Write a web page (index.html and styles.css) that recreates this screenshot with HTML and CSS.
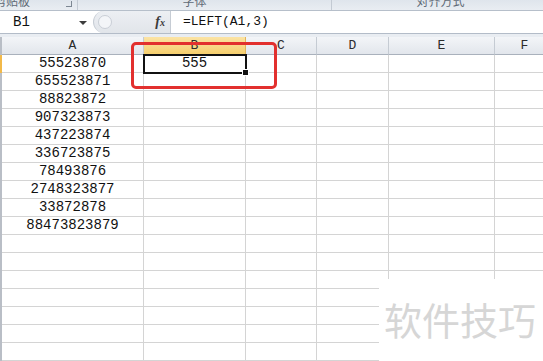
FILE: index.html
```html
<!DOCTYPE html>
<html lang="zh-CN">
<head>
    <meta charset="UTF-8">
    <title>LEFT 函数</title>
    <link rel="stylesheet" href="styles.css">
</head>
<body>
    <div class="ribbon">
        <div class="group group-clip"><span class="group-label">剪贴板</span><span class="launcher"></span></div>
        <div class="group group-font"><span class="group-label">字体</span></div>
        <div class="group group-align"><span class="group-label">对齐方式</span></div>
    </div>
    <div class="formula-bar">
        <div class="name-box">B1<span class="drop-arrow"></span></div>
        <div class="fx-area">
            <span class="expand-btn"></span>
            <span class="fx">f<small>x</small></span>
        </div>
        <div class="formula-input">=LEFT(A1,3)</div>
    </div>
    <div class="sheet-wrap">
        <div class="sheet">
            <div class="col-head">A</div>
            <div class="col-head active">B</div>
            <div class="col-head">C</div>
            <div class="col-head">D</div>
            <div class="col-head">E</div>
            <div class="col-head">F</div>

            <div class="cell row-active">55523870</div><div class="cell selected">555</div><div class="cell"></div><div class="cell"></div><div class="cell"></div><div class="cell"></div>
            <div class="cell">655523871</div><div class="cell"></div><div class="cell"></div><div class="cell"></div><div class="cell"></div><div class="cell"></div>
            <div class="cell">88823872</div><div class="cell"></div><div class="cell"></div><div class="cell"></div><div class="cell"></div><div class="cell"></div>
            <div class="cell">907323873</div><div class="cell"></div><div class="cell"></div><div class="cell"></div><div class="cell"></div><div class="cell"></div>
            <div class="cell">437223874</div><div class="cell"></div><div class="cell"></div><div class="cell"></div><div class="cell"></div><div class="cell"></div>
            <div class="cell">336723875</div><div class="cell"></div><div class="cell"></div><div class="cell"></div><div class="cell"></div><div class="cell"></div>
            <div class="cell">78493876</div><div class="cell"></div><div class="cell"></div><div class="cell"></div><div class="cell"></div><div class="cell"></div>
            <div class="cell">2748323877</div><div class="cell"></div><div class="cell"></div><div class="cell"></div><div class="cell"></div><div class="cell"></div>
            <div class="cell">33872878</div><div class="cell"></div><div class="cell"></div><div class="cell"></div><div class="cell"></div><div class="cell"></div>
            <div class="cell">88473823879</div><div class="cell"></div><div class="cell"></div><div class="cell"></div><div class="cell"></div><div class="cell"></div>
            <div class="cell"></div><div class="cell"></div><div class="cell"></div><div class="cell"></div><div class="cell"></div><div class="cell"></div>
            <div class="cell"></div><div class="cell"></div><div class="cell"></div><div class="cell"></div><div class="cell"></div><div class="cell"></div>
            <div class="cell"></div><div class="cell"></div><div class="cell"></div><div class="cell"></div><div class="cell"></div><div class="cell"></div>
            <div class="cell"></div><div class="cell"></div><div class="cell"></div><div class="cell"></div><div class="cell"></div><div class="cell"></div>
            <div class="cell"></div><div class="cell"></div><div class="cell"></div><div class="cell"></div><div class="cell"></div><div class="cell"></div>
            <div class="cell"></div><div class="cell"></div><div class="cell"></div><div class="cell"></div><div class="cell"></div><div class="cell"></div>
            <div class="cell"></div><div class="cell"></div><div class="cell"></div><div class="cell"></div><div class="cell"></div><div class="cell"></div>
        </div>
        <div class="callout"></div>
        <div class="watermark">软件技巧</div>
    </div>
</body>
</html>
```

FILE: styles.css
```css
body {
    margin: 0;
    width: 543px;
    height: 361px;
    overflow: hidden;
    background: #ffffff;
    font-family: "Liberation Mono", "Noto Sans CJK SC", monospace;
}
.ribbon {
    display: flex;
    height: 10px;
    overflow: hidden;
    background: linear-gradient(to bottom, #dfe5ec, #e9edf2);
    border-bottom: 1px solid #b6bfca;
}
.group {
    display: flex;
    justify-content: center;
    position: relative;
    box-sizing: border-box;
    border-right: 1px solid #c3cad3;
}
.group-clip {
    width: 78px;
    justify-content: flex-start;
}
.group-font {
    width: 254px;
    padding-right: 20px;
}
.group-align {
    flex: 1;
    border-right: none;
    padding-left: 6px;
}
.group-label {
    font-family: "Noto Sans CJK SC", sans-serif;
    font-size: 12px;
    line-height: 12px;
    margin-top: -5px;
    color: #606a76;
    white-space: nowrap;
}
.group-clip .group-label {
    margin-left: -6px;
}
.launcher {
    position: absolute;
    right: 5px;
    top: 1px;
    width: 5px;
    height: 5px;
    border-right: 1px solid #7d8793;
    border-bottom: 1px solid #7d8793;
}
.formula-bar {
    display: flex;
    height: 22px;
    background: #ffffff;
    border-bottom: 1px solid #b3bcc8;
}
.name-box {
    width: 93px;
    box-sizing: border-box;
    padding-left: 13px;
    font-size: 14px;
    line-height: 22px;
    color: #111;
    position: relative;
}
.drop-arrow {
    position: absolute;
    right: 6px;
    top: 10px;
    border-left: 4px solid transparent;
    border-right: 4px solid transparent;
    border-top: 4px solid #3c3c3c;
}
.fx-area {
    width: 77px;
    box-sizing: border-box;
    display: flex;
    align-items: center;
    justify-content: space-between;
    background: linear-gradient(to bottom, #eceff3, #e1e5ea);
    border-radius: 11px 0 0 11px;
    border-left: 1px solid #c6ccd4;
    padding: 0 5px 0 4px;
}
.expand-btn {
    width: 12px;
    height: 12px;
    border-radius: 50%;
    border: 1px solid #c9ced6;
    background: #f3f5f8;
}
.fx {
    font-family: "Liberation Serif", serif;
    font-style: italic;
    font-weight: bold;
    font-size: 14px;
    color: #3a3a3a;
}
.fx small {
    font-size: 10px;
}
.formula-input {
    flex: 1;
    padding-left: 12px;
    font-size: 13px;
    line-height: 22px;
    color: #111;
    border-left: 1px solid #c6ccd4;
}
.sheet-wrap {
    position: relative;
    padding-top: 3px;
    background: #e9edf2;
}
.sheet {
    display: grid;
    grid-template-columns: 142px 102px 71px 72px 106px 60px;
    grid-auto-rows: 18px;
    border-left: 2px solid #b9bec6;
    background: #ffffff;
}
.col-head {
    height: 18px;
    box-sizing: border-box;
    text-align: center;
    font-size: 13px;
    line-height: 17px;
    color: #2b2b2b;
    background: linear-gradient(to bottom, #f3f5f8, #e2e6ec);
    border-right: 1px solid #c5cbd3;
    border-bottom: 1px solid #a9b1bc;
}
.col-head.active {
    background: linear-gradient(to bottom, #fbe3a4, #f6cf6e);
    border-right-color: #e1b45a;
}
.cell {
    box-sizing: border-box;
    text-align: center;
    font-size: 14px;
    line-height: 17px;
    color: #111;
    border-right: 1px solid #d4d4d4;
    border-bottom: 1px solid #d4d4d4;
}
.row-active {
    box-shadow: -2px 0 0 #f2b94a;
}
.selected {
    position: relative;
    outline: 2px solid #111;
    outline-offset: -1px;
}
.selected::after {
    content: "";
    position: absolute;
    right: -4px;
    bottom: -4px;
    width: 5px;
    height: 5px;
    background: #111;
    border: 1px solid #fff;
}
.callout {
    position: absolute;
    left: 131px;
    top: 8px;
    width: 140px;
    height: 41px;
    border: 3px solid #e2302e;
    border-radius: 5px;
}
.watermark {
    position: absolute;
    left: 379px;
    top: 245px;
    right: 0;
    bottom: 0;
    background: #ffffff;
    padding: 16px 0 0 5px;
    font-family: "Noto Sans CJK SC", sans-serif;
    font-size: 38px;
    line-height: 48px;
    color: #d6d6d6;
}
```
